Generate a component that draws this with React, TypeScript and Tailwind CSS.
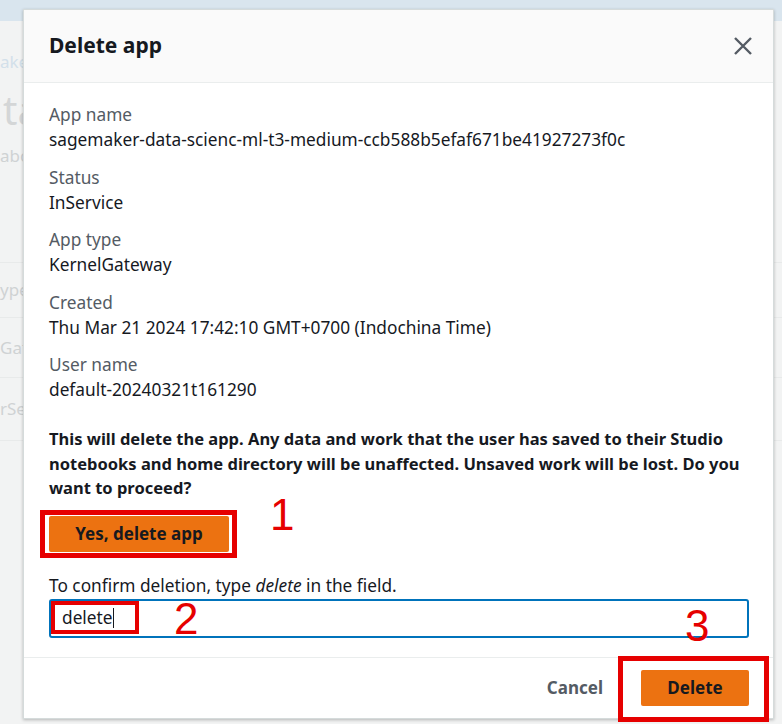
import React from "react";

const font = { fontFamily: '"Noto Sans", "Open Sans", Arial, sans-serif' };
const red = { fontFamily: '"Liberation Sans", Arial, sans-serif' };

function Field({ label, value }: { label: string; value: string }) {
  return (
    <div className="flex flex-col">
      <div className="text-[17.3px] leading-[25px] text-[#545b64]">{label}</div>
      <div className="text-[17.3px] leading-[25px] text-[#16191f]">{value}</div>
    </div>
  );
}

export default function App() {
  return (
    <div className="relative w-[782px] h-[724px] overflow-hidden bg-[#f2f3f3]" style={font}>
      {/* faded background page */}
      <div className="h-[21px] bg-[#d9e5ee]" />
      <div className="flex flex-col text-[#cfd2d3]">
        <div className="mt-[28px] h-[26px] leading-[26px] text-[17px] text-[#d3e0ea]">ake</div>
        <div className="mt-[12px] h-[46px] leading-[46px] text-[40px] text-[#d4d6d7] pl-[3px]">ta</div>
        <div className="mt-[10px] h-[26px] leading-[26px] text-[17px]">abo</div>
        <div className="mt-[93px] border-t border-[#e8eaea]" />
        <div className="h-[54px] flex items-center text-[17px]">ype</div>
        <div className="border-t border-[#e8eaea]" />
        <div className="h-[59px] flex items-center text-[17px]">Gat</div>
        <div className="border-t border-[#e8eaea]" />
        <div className="h-[62px] flex items-center text-[17px]">rSe</div>
        <div className="border-t border-[#e8eaea]" />
      </div>

      {/* modal */}
      <div className="absolute left-[23px] top-[9px] w-[751px] h-[710px] bg-white border border-[#d5dbdb] shadow-[0_1px_3px_rgba(0,0,0,0.25)] flex flex-col">
        <div className="h-[73px] shrink-0 bg-[#fafafa] border-b border-[#eaeded] flex items-center justify-between pl-[25px] pr-[20px]">
          <div className="text-[21px] font-bold text-[#16191f]">Delete app</div>
          <svg width="20" height="20" viewBox="0 0 20 20" className="text-[#545b64]">
            <path d="M2 2 L18 18 M18 2 L2 18" stroke="currentColor" strokeWidth="2.4" fill="none" />
          </svg>
        </div>

        <div className="flex-1 flex flex-col pl-[25px] pr-[24px] pt-[19px]">
          <div className="flex flex-col gap-[12.5px]">
            <Field label="App name" value="sagemaker-data-scienc-ml-t3-medium-ccb588b5efaf671be41927273f0c" />
            <Field label="Status" value="InService" />
            <Field label="App type" value="KernelGateway" />
            <Field label="Created" value="Thu Mar 21 2024 17:42:10 GMT+0700 (Indochina Time)" />
            <Field label="User name" value="default-20240321t161290" />
          </div>

          <p className="mt-[25px] text-[16.5px] leading-[24.5px] font-bold text-[#16191f]">
            This will delete the app. Any data and work that the user has saved to their Studio notebooks and home directory will be unaffected. Unsaved work will be lost. Do you want to proceed?
          </p>

          <div className="relative mt-[15px] flex">
            <button className="w-[180px] h-[36px] bg-[#ec7211] rounded-[2px] text-[17px] font-bold text-[#16191f]">
              Yes, delete app
            </button>
            <div className="absolute left-[-9px] top-[-6px] w-[197px] h-[48px] border-[5px] border-[#e60000]" />
            <div className="absolute left-[221px] top-[-14px] text-[44px] leading-[26px] text-[#e60000]" style={red}>1</div>
          </div>

          <div className="mt-[22px] text-[17.3px] leading-[24px] text-[#16191f]">
            To confirm deletion, type <i>delete</i> in the field.
          </div>
          <div className="relative mt-[1px] h-[39px] border-2 border-[#0073bb] rounded-[3px] flex items-center pl-[11px]">
            <span className="text-[17.3px] text-[#16191f]">delete</span>
            <span className="w-[1px] h-[20px] bg-[#16191f]" />
            <div className="absolute left-[0px] top-[0px] w-[88px] h-[33px] border-[4px] border-[#e60000]" />
            <div className="absolute left-[123px] top-[-4px] text-[44px] leading-[44px] text-[#e60000]" style={red}>2</div>
            <div className="absolute left-[634px] top-[3px] text-[44px] leading-[44px] text-[#e60000]" style={red}>3</div>
          </div>
        </div>

        <div className="h-[61px] shrink-0 border-t border-[#eaeded] flex items-center justify-end gap-[38px] pr-[24px]">
          <span className="text-[17px] font-bold text-[#545b64]">Cancel</span>
          <div className="relative">
            <button className="w-[108px] h-[36px] bg-[#ec7211] rounded-[2px] text-[17px] font-bold text-[#16191f]">Delete</button>
            <div className="absolute left-[-23px] top-[-14px] w-[151px] h-[66px] border-[5px] border-[#e60000]" />
          </div>
        </div>
      </div>
    </div>
  );
}
